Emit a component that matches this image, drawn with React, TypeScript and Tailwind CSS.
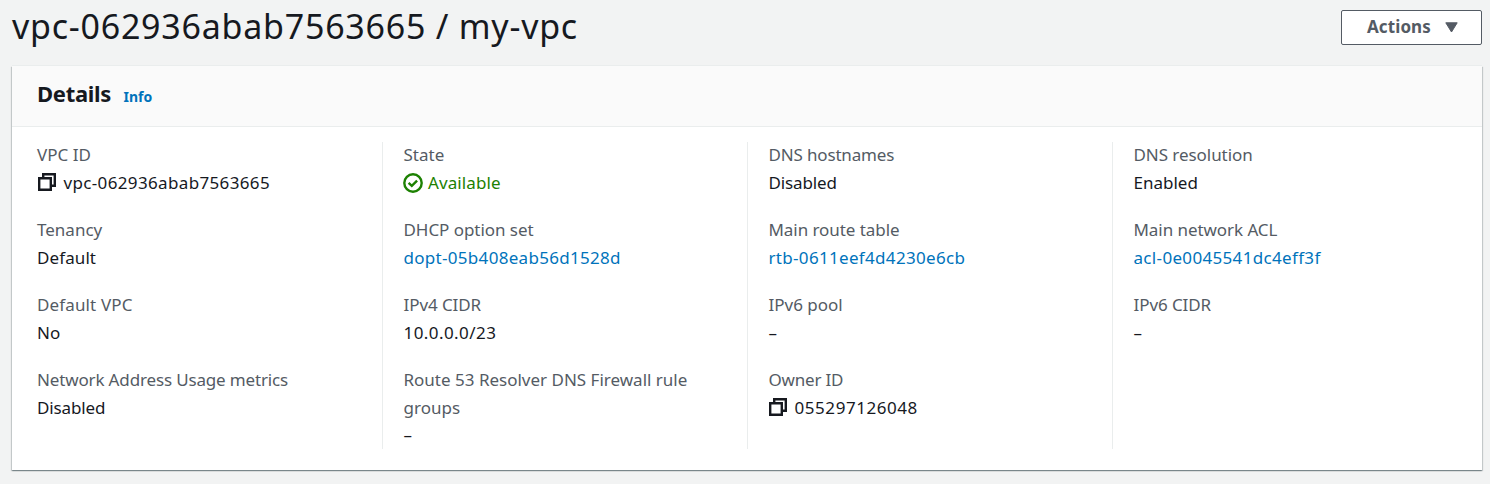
import type { ReactNode } from "react";

function CopyIcon({ className }: { className: string }) {
  return (
    <svg width="18" height="18" viewBox="0 0 18 18" fill="none" stroke="#16191f" strokeWidth="2.4" className={`mr-[7.5px] shrink-0 ${className}`}>
      <path d="M1.200 5.200h11.600v11.600H1.200z" />
      <path d="M5.200 5.200V1.200h11.600v11.600h-4" />
    </svg>
  );
}

function CheckIcon() {
  return (
    <svg width="20" height="20" viewBox="0 0 20 20" fill="none" stroke="#1d8102" strokeWidth="2.4" className="-ml-[0.5px] mr-[5px] mt-[2px] shrink-0">
      <circle cx="10" cy="10" r="8.7" />
      <path d="M5.600 9.800l3.200 3.100 5.300-5.300" />
    </svg>
  );
}

type FieldProps = { label: ReactNode; children: ReactNode; tone?: string; labelTracking?: string };

function Field({ label, children, tone = "text-[#16191f]", labelTracking = "" }: FieldProps) {
  return (
    <div className="leading-[27.5px]">
      <dt className={`text-[#545b64] ${labelTracking}`}><span>{label}</span></dt>
      <dd className={`flex items-center ${tone}`}>
        {children}
      </dd>
    </div>
  );
}

function Column({ children, first = false }: { children: ReactNode; first?: boolean }) {
  return (
    <div className={first ? "" : "border-l border-[#eaeded] pl-[20.5px]"}>
      <dl className="-mt-px flex flex-col gap-5">{children}</dl>
    </div>
  );
}

const link = "text-[#0073bb]";
const id = "tracking-[0.350px]";

export default function App() {
  return (
    <div className="h-[484px] w-[1490px] overflow-hidden bg-[#f2f3f3] font-['Noto_Sans',sans-serif] text-[17px] text-[#16191f]">
      <header className="flex h-[66px] items-start justify-between pl-3 pr-2">
        <h1 className="pt-[4px] text-[34px] leading-[45px] tracking-[0.76px]"><span>vpc-062936abab7563665 / my-vpc</span></h1>
        <button className="mt-[10px] flex h-[35px] w-[141px] items-center rounded-[2px] border border-[#545b64] bg-white pb-[2px] pl-[25px] font-bold tracking-[0.1px] text-[#545b64]">
          <span>Actions</span>
          <svg width="13" height="11" viewBox="0 0 13 11" className="ml-[14px] mt-px" fill="#545b64" stroke="#545b64" strokeLinejoin="round">
            <path d="M.8.8h11.400L6.500 10z" />
          </svg>
        </button>
      </header>
      <section className="ml-3 h-[404px] w-[1470px] bg-white shadow-[0_-1px_0_0_#eaeded,0_1px_1px_0_rgba(0,28,36,0.3),1px_1px_1px_0_rgba(0,28,36,0.15),-1px_1px_1px_0_rgba(0,28,36,0.15)]">
        <div className="flex h-[61px] items-baseline border-b border-[#eaeded] bg-[#fafafa] pl-[25px] pt-[11px]">
          <h2 className="text-[22px] font-bold leading-[32px] tracking-[-0.3px]"><span>Details</span></h2>
          <a className="ml-[12.5px] text-[14px] font-bold text-[#0073bb]"><span>Info</span></a>
        </div>
        <div className="mt-[15px] grid h-[307px] grid-cols-[345px_365px_365px_345px] pl-[25px]">
          <Column first>
            <Field label="VPC ID"><CopyIcon className="ml-px" /><span className={id}>vpc-062936abab7563665</span></Field>
            <Field label="Tenancy"><span className="tracking-[0.1px]">Default</span></Field>
            <Field label="Default VPC" labelTracking="tracking-[0.14px]"><span>No</span></Field>
            <Field label="Network Address Usage metrics" labelTracking="tracking-[-0.150px]"><span className="tracking-[-0.120px]">Disabled</span></Field>
          </Column>
          <Column>
            <Field label="State" tone="text-[#1d8102]"><CheckIcon /><span className="tracking-[0.1px]">Available</span></Field>
            <Field label="DHCP option set" tone={link} labelTracking="tracking-[-0.050px]"><span className="tracking-[0.3px]">dopt-05b408eab56d1528d</span></Field>
            <Field label="IPv4 CIDR" labelTracking="tracking-[-0.080px]"><span className="tracking-[0.430px]">10.0.0.0/23</span></Field>
            <Field label={<>Route 53 Resolver DNS Firewall rule<br />groups</>}><span>–</span></Field>
          </Column>
          <Column>
            <Field label="DNS hostnames" labelTracking="tracking-[-0.160px]"><span className="tracking-[-0.120px]">Disabled</span></Field>
            <Field label="Main route table" tone={link} labelTracking="tracking-[-0.060px]"><span className="tracking-[0.320px]">rtb-0611eef4d4230e6cb</span></Field>
            <Field label="IPv6 pool"><span>–</span></Field>
            <Field label="Owner ID" labelTracking="tracking-[-0.2px]"><CopyIcon className="ml-[0.5px]" /><span className="tracking-[0.560px]">055297126048</span></Field>
          </Column>
          <Column>
            <Field label="DNS resolution" labelTracking="tracking-[-0.060px]"><span>Enabled</span></Field>
            <Field label="Main network ACL" tone={link} labelTracking="tracking-[-0.060px]"><span className="tracking-[0.330px]">acl-0e0045541dc4eff3f</span></Field>
            <Field label="IPv6 CIDR" labelTracking="tracking-[-0.080px]"><span>–</span></Field>
          </Column>
        </div>
      </section>
    </div>
  );
}
